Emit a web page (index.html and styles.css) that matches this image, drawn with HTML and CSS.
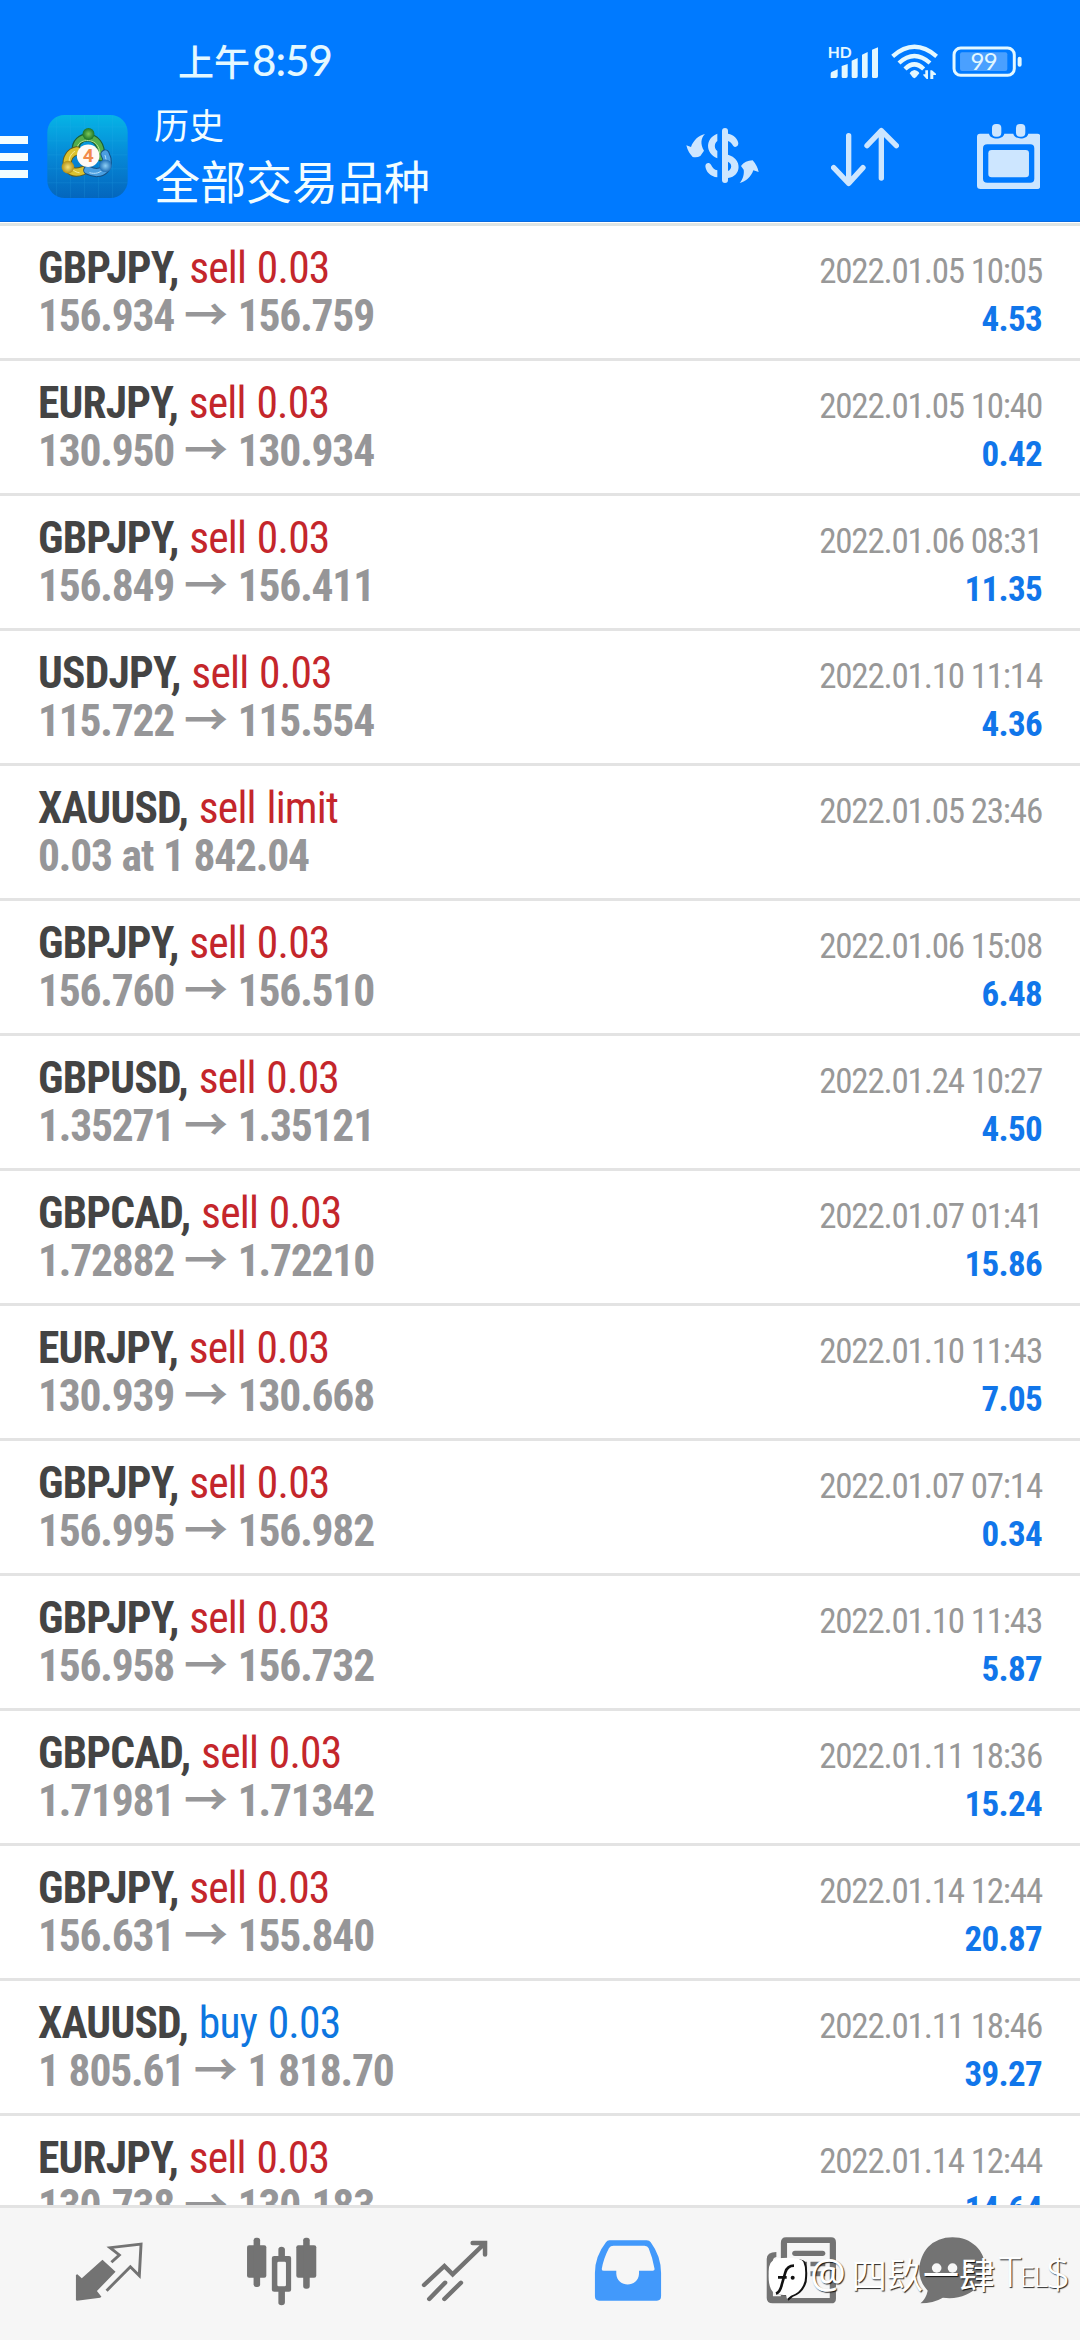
FILE: index.html
```html
<!DOCTYPE html>
<html lang="zh-CN">
<head>
<meta charset="utf-8">
<title>历史</title>
<link rel="stylesheet" href="styles.css">
</head>
<body>
<div class="screen">
  <header class="header">
    <div class="status">
      <div class="clock">上午<span class="clock-digits">8:59</span></div>
      <div class="status-icons">
        <svg class="signal" viewBox="23 15 152 102">
          <text x="22" y="53" class="hd">HD</text>
          <path d="M31 113V101Q31 97 35 95L52 88V108Q52 114 46 114H35Q31 114 31 113ZM64 78L82 72V109Q82 114 77 114H68Q64 114 64 110ZM94 62L112 54V109Q112 114 107 114H98Q94 114 94 110ZM125 44L142 36V109Q142 114 137 114H129Q125 114 125 110ZM155 29L173 22V109Q173 114 168 114H159Q155 114 155 110Z"/>
        </svg>
        <svg class="wifi" viewBox="211 14 142 108">
          <g fill="none" stroke="#e4f8ff" stroke-width="13">
            <path d="M216 51Q281-6 348 51M235 71Q281 29 328 71M253 89Q281 61 309 89"/>
          </g>
          <path d="M281 92Q293 94 296 102L286 114Q281 119 276 114L267 102Q270 94 281 92ZM322 93V119H318L308 108V105H314V93ZM329 119V93H334L346 103V107H338V119Z"/>
        </svg>
        <svg class="battery" viewBox="394 19 210 94">
          <rect x="418" y="38" width="142" height="56" rx="6" fill="#4aa0ff"/>
          <rect x="400" y="25" width="181" height="82" rx="20" fill="none" stroke="#e4f8ff" stroke-width="9"/>
          <rect x="591" y="51" width="12" height="30" rx="6"/>
          <text x="489" y="92" text-anchor="middle" class="charge">99</text>
        </svg>
      </div>
    </div>
    <div class="toolbar">
      <div class="menu"><i></i><i></i><i></i></div>
      <svg class="logo" viewBox="22 14 242 250">
        <defs>
          <linearGradient id="tile" x1="0" y1="0" x2="0" y2="1"><stop offset="0" stop-color="#06b4e6"/><stop offset=".5" stop-color="#0688d6"/><stop offset="1" stop-color="#0466bd"/></linearGradient>
          <radialGradient id="green"><stop offset="0" stop-color="#7cc85a"/><stop offset="1" stop-color="#1b7428"/></radialGradient>
          <radialGradient id="gold"><stop offset="0" stop-color="#f4e27a"/><stop offset="1" stop-color="#b28f16"/></radialGradient>
          <radialGradient id="sky"><stop offset="0" stop-color="#8fd0f6"/><stop offset="1" stop-color="#1f6fb6"/></radialGradient>
        </defs>
        <rect x="22" y="14" width="242" height="250" rx="52" fill="url(#tile)"/>
        <path d="M50 20V258M92 15V263M134 15V263M176 15V263M218 15V263M23 50H263M23 92H263M23 134H263M23 176H263M23 218H263" stroke="#35b7ee" stroke-width="1.5" opacity=".3"/>
        <g fill="none" stroke-linecap="round">
          <path d="M108 122C100 70 190 60 184 142" stroke="#1b5e36" stroke-width="24"/>
          <path d="M108 122C100 70 190 60 184 142" stroke="#53ad4c" stroke-width="17"/>
          <path d="M112 116C108 84 178 76 180 128" stroke="#b2e08c" stroke-width="3"/>
          <path d="M111 122C68 130 72 204 128 182" stroke="#665c1a" stroke-width="28"/>
          <path d="M111 122C68 130 72 204 128 182" stroke="#dcc22f" stroke-width="22"/>
          <path d="M104 124C76 140 86 184 118 188" stroke="#f6ec9a" stroke-width="3"/>
          <path d="M144 180C186 202 216 170 196 132" stroke="#155083" stroke-width="28"/>
          <path d="M144 180C186 202 216 170 196 132" stroke="#4b9fe0" stroke-width="22"/>
          <path d="M150 188C184 198 208 168 196 136" stroke="#b8e1fb" stroke-width="3"/>
        </g>
        <circle cx="146" cy="71" r="18" fill="url(#green)"/>
        <circle cx="84" cy="171" r="19" fill="url(#gold)"/>
        <circle cx="197" cy="167" r="19" fill="url(#sky)"/>
        <circle cx="145" cy="137" r="34" fill="#fffaf6"/>
        <text x="145" y="157" text-anchor="middle" class="logo-digit">4</text>
      </svg>
      <div class="titles">
        <div class="title-small">历史</div>
        <div class="title-large">全部交易品种</div>
      </div>
      <div class="actions">
        <svg class="act-dollar" viewBox="77 68 219 195">
          <rect x="185" y="80" width="18" height="165" rx="9"/>
          <path d="M203 97C220 100 233 113 234 126C234 136 224 140 219 134C214 127 210 121 203 119ZM171 97V119C161 126 161 142 171 149V171C134 155 134 111 171 97ZM203 160C246 172 245 224 203 230V209C216 203 216 187 203 181ZM171 228C151 226 136 211 135 194C136 184 147 182 152 190C156 199 162 205 171 207Z"/>
          <path d="M134 98C122 109 119 128 131 148L120 164Q110 170 97 167Q83 153 78 132L92 137C99 117 114 103 134 98ZM238 245C249 233 252 215 250 205L242 194Q254 178 277 177Q291 193 295 212L279 207C272 227 257 240 238 245Z"/>
        </svg>
        <svg class="act-sort" viewBox="513 68 204 195">
          <path d="M566 103V246M521 199L566 246L609 199M664 230V88M621 133L664 88L709 133" fill="none" stroke="#cde6ff" stroke-width="16" stroke-linecap="round" stroke-linejoin="round"/>
        </svg>
        <svg class="act-cal" viewBox="949 68 190 195">
          <path fill-rule="evenodd" d="M958 97H985C988 116 1028 116 1031 97H1058C1061 116 1100 116 1103 97H1130Q1139 97 1139 106V253Q1139 263 1130 263H960Q949 263 949 253V106Q949 97 958 97ZM980 129Q967 129 967 141V232Q967 244 980 244H1109Q1121 244 1121 232V141Q1121 129 1109 129Z"/>
          <rect x="983" y="146" width="122" height="82" rx="10"/>
          <rect x="994" y="68" width="28" height="38" rx="12"/><rect x="1066" y="68" width="28" height="38" rx="12"/>
        </svg>
      </div>
    </div>
  </header>

  <main class="list">
    <section class="row"><div class="deal"><div class="head"><b class="sym">GBPJPY,</b> <span class="sell">sell 0.03</span></div><div class="price">156.934 <i class="arrow">→</i> 156.759</div></div><div class="result"><div class="date">2022.01.05 10:05</div><div class="profit">4.53</div></div></section>
    <section class="row"><div class="deal"><div class="head"><b class="sym">EURJPY,</b> <span class="sell">sell 0.03</span></div><div class="price">130.950 <i class="arrow">→</i> 130.934</div></div><div class="result"><div class="date">2022.01.05 10:40</div><div class="profit">0.42</div></div></section>
    <section class="row"><div class="deal"><div class="head"><b class="sym">GBPJPY,</b> <span class="sell">sell 0.03</span></div><div class="price">156.849 <i class="arrow">→</i> 156.411</div></div><div class="result"><div class="date">2022.01.06 08:31</div><div class="profit">11.35</div></div></section>
    <section class="row"><div class="deal"><div class="head"><b class="sym">USDJPY,</b> <span class="sell">sell 0.03</span></div><div class="price">115.722 <i class="arrow">→</i> 115.554</div></div><div class="result"><div class="date">2022.01.10 11:14</div><div class="profit">4.36</div></div></section>
    <section class="row"><div class="deal"><div class="head"><b class="sym">XAUUSD,</b> <span class="sell">sell limit</span></div><div class="price">0.03 at 1 842.04</div></div><div class="result"><div class="date">2022.01.05 23:46</div></div></section>
    <section class="row"><div class="deal"><div class="head"><b class="sym">GBPJPY,</b> <span class="sell">sell 0.03</span></div><div class="price">156.760 <i class="arrow">→</i> 156.510</div></div><div class="result"><div class="date">2022.01.06 15:08</div><div class="profit">6.48</div></div></section>
    <section class="row"><div class="deal"><div class="head"><b class="sym">GBPUSD,</b> <span class="sell">sell 0.03</span></div><div class="price">1.35271 <i class="arrow">→</i> 1.35121</div></div><div class="result"><div class="date">2022.01.24 10:27</div><div class="profit">4.50</div></div></section>
    <section class="row"><div class="deal"><div class="head"><b class="sym">GBPCAD,</b> <span class="sell">sell 0.03</span></div><div class="price">1.72882 <i class="arrow">→</i> 1.72210</div></div><div class="result"><div class="date">2022.01.07 01:41</div><div class="profit">15.86</div></div></section>
    <section class="row"><div class="deal"><div class="head"><b class="sym">EURJPY,</b> <span class="sell">sell 0.03</span></div><div class="price">130.939 <i class="arrow">→</i> 130.668</div></div><div class="result"><div class="date">2022.01.10 11:43</div><div class="profit">7.05</div></div></section>
    <section class="row"><div class="deal"><div class="head"><b class="sym">GBPJPY,</b> <span class="sell">sell 0.03</span></div><div class="price">156.995 <i class="arrow">→</i> 156.982</div></div><div class="result"><div class="date">2022.01.07 07:14</div><div class="profit">0.34</div></div></section>
    <section class="row"><div class="deal"><div class="head"><b class="sym">GBPJPY,</b> <span class="sell">sell 0.03</span></div><div class="price">156.958 <i class="arrow">→</i> 156.732</div></div><div class="result"><div class="date">2022.01.10 11:43</div><div class="profit">5.87</div></div></section>
    <section class="row"><div class="deal"><div class="head"><b class="sym">GBPCAD,</b> <span class="sell">sell 0.03</span></div><div class="price">1.71981 <i class="arrow">→</i> 1.71342</div></div><div class="result"><div class="date">2022.01.11 18:36</div><div class="profit">15.24</div></div></section>
    <section class="row"><div class="deal"><div class="head"><b class="sym">GBPJPY,</b> <span class="sell">sell 0.03</span></div><div class="price">156.631 <i class="arrow">→</i> 155.840</div></div><div class="result"><div class="date">2022.01.14 12:44</div><div class="profit">20.87</div></div></section>
    <section class="row"><div class="deal"><div class="head"><b class="sym">XAUUSD,</b> <span class="buy">buy 0.03</span></div><div class="price">1 805.61 <i class="arrow">→</i> 1 818.70</div></div><div class="result"><div class="date">2022.01.11 18:46</div><div class="profit">39.27</div></div></section>
    <section class="row"><div class="deal"><div class="head"><b class="sym">EURJPY,</b> <span class="sell">sell 0.03</span></div><div class="price">130.738 <i class="arrow">→</i> 130.183</div></div><div class="result"><div class="date">2022.01.14 12:44</div><div class="profit">14.64</div></div></section>
  </main>

  <nav class="tabs">
    <div class="tab"><svg viewBox="210.5 409 209 209" preserveAspectRatio="none">
      <path d="M296 480L334 516L280 574L293 591L289 594L222 603L219 601V526L223 524L236 536Z"/>
      <path d="M322 488L345 466L318 444L408 433L403 528L377 501L308 573" fill="none" stroke="#737373" stroke-width="8.5"/>
    </svg></div>
    <div class="tab"><svg viewBox="713 409 209 209" preserveAspectRatio="none">
      <rect x="716" y="437" width="56" height="97" rx="6"/><rect x="735" y="414" width="19" height="148" rx="8"/>
      <rect x="859" y="437" width="58" height="97" rx="6"/><rect x="879" y="414" width="19" height="153" rx="8"/>
      <path fill-rule="evenodd" d="M807 469V449Q807 441 816 441T826 449V469H838Q844 469 844 475V570Q844 576 838 576H826V608Q826 617 816 617T807 608V576H795Q788 576 788 570V475Q788 469 795 469ZM808 486Q804 486 804 490V556Q804 560 808 560H825Q829 560 829 556V490Q829 486 825 486Z"/>
    </svg></div>
    <div class="tab"><svg viewBox="1215.3 409 209 209" preserveAspectRatio="none">
      <path d="M1230 556L1289 499L1313 524L1407 430M1371 430H1407V465M1245 598L1291 549M1289 598L1337 549" fill="none" stroke="#737373" stroke-width="13" stroke-linecap="round" stroke-linejoin="miter"/>
    </svg></div>
    <div class="tab active"><svg viewBox="149.5 409 209 209" preserveAspectRatio="none">
      <path fill-rule="evenodd" d="M200 422H308Q316 422 320 428Q350 470 350 520V590Q350 603 338 603H170Q158 603 158 590V520Q158 470 190 428Q194 422 200 422ZM212 438Q203 438 199 445Q183 476 178 507Q177 513 184 513H220V522C222 565 284 565 286 522V513H326Q332 513 331 507Q326 476 314 446Q311 438 302 438Z"/>
    </svg></div>
    <div class="tab"><svg viewBox="652 409 209 209" preserveAspectRatio="none">
      <path fill-rule="evenodd" d="M657 478Q657 457 685 457V472Q675 474 675 484V590H698V430Q698 413 713 413H844Q858 413 858 428V597Q858 611 844 611H674Q657 611 657 595ZM716 430V595H840V430Z"/>
      <rect x="731" y="453" width="96" height="16" rx="8"/><path d="M731 486H774V530H731ZM784 486H827V500H784ZM784 515H827V530H784Z"/>
    </svg></div>
    <div class="tab tab-chat"><svg viewBox="1092 409 209 209" preserveAspectRatio="none">
      <path d="M1198 413C1253 413 1293 453 1293 505C1293 558 1240 604 1170 594Q1142 611 1105 611Q1121 597 1126 573C1087 530 1100 474 1127 442Q1155 413 1198 413Z"/>
      <circle cx="1152" cy="505" r="14" fill="#f6f6f6"/><circle cx="1198" cy="505" r="14" fill="#f6f6f6"/><circle cx="1244" cy="505" r="14" fill="#f6f6f6"/>
    </svg></div>
  </nav>

  <div class="mark">
    <svg class="mark-logo" viewBox="26 116 120 130">
      <path d="M53 122Q26 130 28 165Q28 215 50 226Q62 231 77 230L83 246L97 234Q128 224 138 190Q143 150 134 130Q124 116 53 122Z" fill="#111" transform="translate(4 1)"/>
      <path d="M53 120Q26 128 28 165Q26 215 48 226Q62 231 80 230L83 242L95 232Q126 224 136 188Q141 150 132 130Q122 114 53 120Z" fill="#fff"/>
      <path d="M50 226Q62 222 67 200L78 162Q84 142 104 142M56 177H82" fill="none" stroke="#111" stroke-width="8"/><circle cx="100" cy="178" r="6" fill="#111"/>
    </svg>
    <span class="mark-at">@</span><span>四镹一肆</span><span class="mark-tel">T<small>EL</small></span><span class="mark-usd">$</span>
  </div>
</div>
</body>
</html>
```
FILE: styles.css
```css
* { box-sizing: border-box; }
body { margin: 0; background: #fff; }
svg { display: block; flex: none; }

.screen {
  position: relative;
  display: flex;
  flex-direction: column;
  width: 1080px;
  height: 2340px;
  overflow: hidden;
  font-family: "Roboto Condensed", Roboto, "Noto Sans CJK SC", sans-serif;
}

/* header */
.header { flex: none; height: 222px; background: #007aff; color: #f2fdff; border-bottom: 1px solid #0a6be0; }
.status { display: flex; justify-content: space-between; height: 90px; padding: 36px 58px 0 178px; }
.clock { display: flex; align-items: center; height: 48px; font: 500 36px/48px "Noto Sans CJK SC", sans-serif; color: #e4f8ff; }
.clock-digits { margin-left: 2px; font: 500 42px/48px Lato, sans-serif; letter-spacing: -.9px; }
.status-icons { display: flex; align-items: flex-start; padding-top: 8px; fill: #e4f8ff; }
.signal { width: 50.7px; height: 34px; margin-top: 1px; }
.wifi { width: 47.3px; height: 36px; margin-left: 12px; }
.battery { width: 70px; height: 31.3px; margin-left: 13.7px; margin-top: 2px; }
.hd { font: 700 47px Lato, sans-serif; }
.charge { font: 400 72px Lato, sans-serif; letter-spacing: -2px; }

.toolbar { display: flex; align-items: center; height: 132px; padding-right: 40px; }
.menu { display: flex; flex-direction: column; gap: 9px; width: 27.5px; padding-top: 2px; }
.menu i { height: 8px; background: #f2fdff; }
.logo { width: 81px; height: 83px; margin-left: 19.5px; }
.logo-digit { font: 700 58px Roboto, sans-serif; fill: #f28a4b; }
.titles { margin: -5px 0 0 26px; font-family: "Noto Sans CJK SC", sans-serif; white-space: nowrap; }
.title-small { font-size: 35px; line-height: 50px; }
.title-large { font-size: 46px; line-height: 60px; }
.actions { display: flex; margin-left: auto; fill: #cde6ff; }
.act-dollar { width: 73px; height: 65px; }
.act-sort { width: 68px; height: 65px; margin-left: 72.5px; }
.act-cal { width: 63.3px; height: 65px; margin-left: 77.3px; }

/* history list */
.list { flex: none; height: 1982px; border-top: 3px solid #e0e5e3; margin-top: 1px; overflow: hidden; }
.row { display: flex; justify-content: space-between; height: 135px; padding: 19px 38px 0; border-bottom: 3px solid #e3e3e3; line-height: 48px; white-space: nowrap; }
.deal { font-size: 43.5px; letter-spacing: -.8px; }
.deal > div, .result > div { height: 48px; }
.head { word-spacing: 1.5px; }
.sym { color: #444; font-weight: 700; letter-spacing: -.8px; }
.sell { color: #c4262b; }
.buy { color: #0d76e0; }
.price { color: #969698; font-weight: 700; letter-spacing: -1.2px; word-spacing: 1px; }
.arrow { font: 700 44px/20px "Noto Sans CJK SC", sans-serif; letter-spacing: 0; }
.result { padding-top: 3px; text-align: right; font-size: 35px; }
.date { color: #989898; letter-spacing: -1.2px; }
.profit { color: #1176ea; font-weight: 700; letter-spacing: -.7px; }

/* bottom tabs */
.tabs { display: flex; flex: none; height: 135px; padding: 28px 0 0 22px; border-top: 3px solid #e3e3e3; background: #f6f6f6; fill: #737373; }
.tab { display: flex; justify-content: center; width: 173px; }
.tab svg { width: 72px; height: 69.7px; }
.tab-chat { width: 130px; }
.active { fill: #4299fb; }

/* watermark over the tab bar */
.mark {
  position: absolute;
  left: 768px;
  top: 2248px;
  display: flex;
  align-items: center;
  height: 50px;
  color: #fff;
  font: 400 36px/50px "Noto Sans CJK SC", sans-serif;
  text-shadow: 1px 1px 1px rgba(0, 0, 0, .85);
  white-space: nowrap;
}
.mark-logo { width: 40px; height: 43.3px; margin-top: 12px; }
.mark-at { width: 43px; padding-left: 2px; font: 400 40px/50px "Noto Sans", sans-serif; }
.mark-tel { width: 51px; padding-left: 4px; font: 300 42px/50px "Noto Sans", sans-serif; letter-spacing: -1.5px; }
.mark-tel small { font-size: 28px; }
.mark-usd { font: 300 43px/50px "Noto Sans", sans-serif; }
```
